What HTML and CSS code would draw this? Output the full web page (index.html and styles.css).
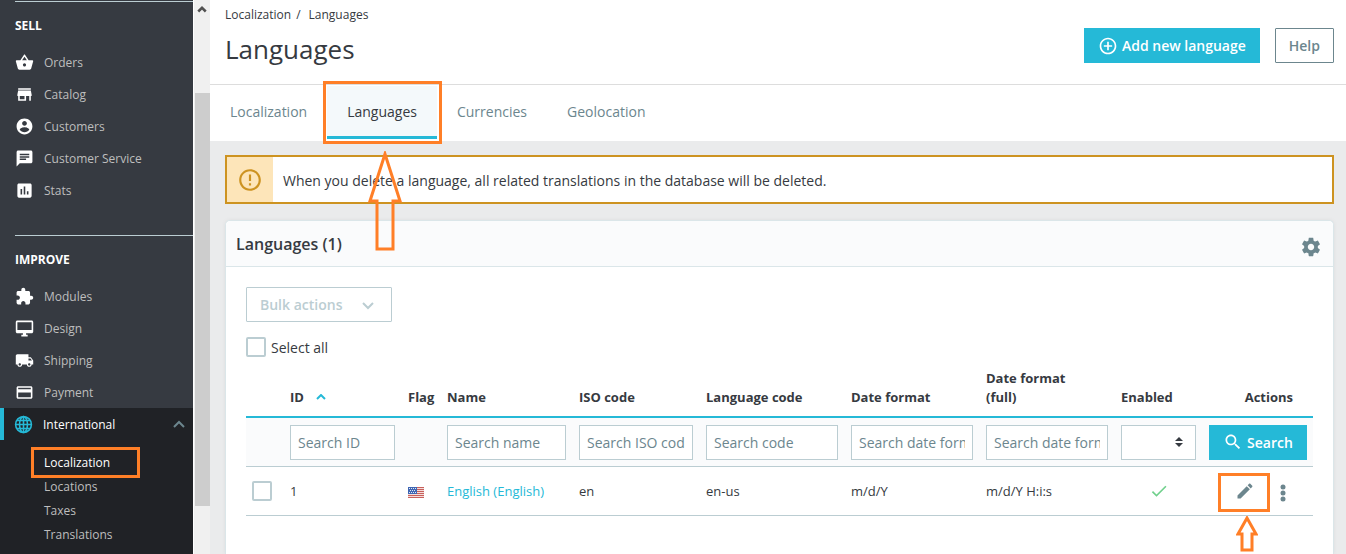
FILE: index.html
```html
<!DOCTYPE html>
<html lang="en">
<head>
    <meta charset="UTF-8">
    <meta name="viewport" content="width=device-width, initial-scale=1.0">
    <title>Languages</title>
    <link rel="stylesheet" href="styles.css">
</head>
<body>

<nav class="sidebar">
    <h2 class="nav-title">SELL</h2>
    <ul class="nav-list">
        <li><a href="#"><svg viewBox="0 0 24 24"><path d="M17.21 9l-4.38-6.56c-.19-.28-.51-.42-.83-.42-.32 0-.64.14-.83.43L6.79 9H2c-.55 0-1 .45-1 1 0 .09.01.18.04.27l2.54 9.27c.23.84 1 1.46 1.92 1.46h13c.92 0 1.69-.62 1.93-1.46l2.54-9.27L23 10c0-.55-.45-1-1-1h-4.79zM9 9l3-4.4L15 9H9zm3 8c-1.1 0-2-.9-2-2s.9-2 2-2 2 .9 2 2-.9 2-2 2z"/></svg>Orders</a></li>
        <li><a href="#"><svg viewBox="0 0 24 24"><path d="M20 4H4v2h16V4zm1 10v-2l-1-5H4l-1 5v2h1v6h10v-6h4v6h2v-6h1zm-9 4H6v-4h6v4z"/></svg>Catalog</a></li>
        <li><a href="#"><svg viewBox="0 0 24 24"><path d="M12 2C6.480 2 2 6.480 2 12s4.480 10 10 10 10-4.480 10-10S17.520 2 12 2zm0 3c1.660 0 3 1.340 3 3s-1.340 3-3 3-3-1.340-3-3 1.340-3 3-3zm0 14.200c-2.500 0-4.710-1.280-6-3.220.03-1.990 4-3.080 6-3.080 1.990 0 5.970 1.090 6 3.080-1.290 1.940-3.500 3.220-6 3.220z"/></svg>Customers</a></li>
        <li><a href="#"><svg viewBox="0 0 24 24"><path d="M20 2H4c-1.100 0-1.990.9-1.990 2L2 22l4-4h14c1.100 0 2-.9 2-2V4c0-1.100-.9-2-2-2zM6 9h12v2H6V9zm8 5H6v-2h8v2zm4-6H6V6h12v2z"/></svg>Customer Service</a></li>
        <li><a href="#"><svg viewBox="0 0 24 24"><path d="M19 3H5c-1.100 0-2 .9-2 2v14c0 1.100.9 2 2 2h14c1.100 0 2-.9 2-2V5c0-1.100-.9-2-2-2zM9 17H7v-7h2v7zm4 0h-2V7h2v10zm4 0h-2v-4h2v4z"/></svg>Stats</a></li>
    </ul>

    <h2 class="nav-title">IMPROVE</h2>
    <ul class="nav-list">
        <li><a href="#"><svg viewBox="0 0 24 24"><path d="M20.500 11H19V7c0-1.100-.9-2-2-2h-4V3.500C13 2.120 11.880 1 10.500 1S8 2.120 8 3.500V5H4c-1.100 0-1.990.9-1.990 2v3.800H3.500c1.490 0 2.700 1.210 2.700 2.700s-1.210 2.700-2.700 2.700H2V20c0 1.100.9 2 2 2h3.800v-1.500c0-1.490 1.210-2.700 2.700-2.700 1.490 0 2.700 1.210 2.700 2.700V22H17c1.100 0 2-.9 2-2v-4h1.500c1.380 0 2.500-1.120 2.500-2.500S21.880 11 20.500 11z"/></svg>Modules</a></li>
        <li><a href="#"><svg viewBox="0 0 24 24"><path d="M21 2H3c-1.100 0-2 .9-2 2v12c0 1.100.9 2 2 2h7v2H8v2h8v-2h-2v-2h7c1.100 0 2-.9 2-2V4c0-1.100-.9-2-2-2zm0 12H3V4h18v10z"/></svg>Design</a></li>
        <li><a href="#"><svg viewBox="0 0 24 24"><path d="M20 8h-3V4H3c-1.100 0-2 .9-2 2v11h2c0 1.660 1.340 3 3 3s3-1.340 3-3h6c0 1.660 1.340 3 3 3s3-1.340 3-3h2v-5l-3-4zM6 18.500c-.83 0-1.500-.67-1.500-1.500s.67-1.500 1.500-1.500 1.500.67 1.500 1.500-.67 1.500-1.500 1.500zm13.500-9l1.960 2.500H17V9.500h2.500zm-1.500 9c-.83 0-1.500-.67-1.500-1.500s.67-1.500 1.500-1.500 1.500.67 1.500 1.500-.67 1.500-1.500 1.500z"/></svg>Shipping</a></li>
        <li><a href="#"><svg viewBox="0 0 24 24"><path d="M20 4H4c-1.110 0-1.990.89-1.990 2L2 18c0 1.110.89 2 2 2h16c1.110 0 2-.89 2-2V6c0-1.110-.89-2-2-2zm0 14H4v-6h16v6zm0-10H4V6h16v2z"/></svg>Payment</a></li>
        <li class="open">
            <a href="#"><svg viewBox="0 0 24 24" class="globe"><circle cx="12" cy="12" r="10"/><ellipse cx="12" cy="12" rx="5" ry="10"/><path d="M12 2v20M2 12h20M4 7h16M4 17h16"/></svg>International<svg viewBox="0 0 12 8" class="caret"><path d="M1 7l5-5 5 5"/></svg></a>
            <ul class="subnav">
                <li><a href="#" class="current">Localization<span class="mark mark-nav"></span></a></li>
                <li><a href="#">Locations</a></li>
                <li><a href="#">Taxes</a></li>
                <li><a href="#">Translations</a></li>
            </ul>
        </li>
    </ul>
</nav>

<div class="scrollbar">
    <svg viewBox="0 0 8 6"><path d="M1 5l3-3 3 3"/></svg>
    <div class="thumb"></div>
</div>

<main class="main">
    <header class="header">
        <div>
            <div class="breadcrumb"><a href="#">Localization</a><span>/</span><a href="#">Languages</a></div>
            <h1>Languages</h1>
        </div>
        <div class="toolbar">
            <button class="btn btn-primary" type="button"><svg viewBox="0 0 24 24"><path d="M13 7h-2v4H7v2h4v4h2v-4h4v-2h-4V7zm-1-5C6.480 2 2 6.480 2 12s4.480 10 10 10 10-4.480 10-10S17.520 2 12 2zm0 18c-4.410 0-8-3.590-8-8s3.590-8 8-8 8 3.590 8 8-3.590 8-8 8z"/></svg>Add new language</button>
            <button class="btn btn-outline" type="button">Help</button>
        </div>
    </header>

    <div class="tabs">
        <a href="#">Localization</a>
        <a href="#" class="active">Languages
            <span class="mark mark-tab"></span>
            <svg class="arrow arrow-tab" viewBox="0 0 34 100"><path d="M17 3L2 50h7v48h16V50h7z"/></svg>
        </a>
        <a href="#">Currencies</a>
        <a href="#">Geolocation</a>
    </div>

    <div class="content">
        <div class="alert">
            <div class="alert-icon"><svg viewBox="0 0 24 24"><path d="M11 15h2v2h-2zm0-8h2v6h-2zm.99-5C6.470 2 2 6.480 2 12s4.470 10 9.990 10C17.520 22 22 17.520 22 12S17.520 2 11.990 2zM12 20c-4.420 0-8-3.580-8-8s3.580-8 8-8 8 3.580 8 8-3.580 8-8 8z"/></svg></div>
            <p>When you delete a language, all related translations in the database will be deleted.</p>
        </div>

        <section class="card">
            <div class="card-header">
                <h3>Languages (1)</h3>
                <button class="icon-btn" type="button" aria-label="Settings"><svg class="gear" viewBox="0 0 24 24"><path d="M19.430 12.980c.04-.32.07-.64.07-.98s-.03-.66-.07-.98l2.110-1.650c.19-.15.24-.42.12-.64l-2-3.460c-.12-.22-.39-.3-.61-.22l-2.490 1c-.52-.4-1.080-.73-1.690-.98l-.38-2.650C14.460 2.180 14.250 2 14 2h-4c-.25 0-.46.18-.49.42l-.38 2.650c-.61.25-1.170.59-1.690.98l-2.490-1c-.23-.09-.49 0-.61.22l-2 3.460c-.13.22-.07.49.12.64l2.110 1.650c-.04.32-.07.65-.07.98s.03.66.07.98l-2.110 1.650c-.19.15-.24.42-.12.64l2 3.460c.12.22.39.3.61.22l2.490-1c.52.4 1.080.73 1.690.98l.38 2.650c.03.24.24.42.49.42h4c.25 0 .46-.18.49-.42l.38-2.650c.61-.25 1.170-.59 1.690-.98l2.490 1c.23.09.49 0 .61-.22l2-3.460c.12-.22.07-.49-.12-.64l-2.110-1.650zM12 15.500c-1.930 0-3.500-1.570-3.500-3.500s1.570-3.500 3.500-3.500 3.500 1.570 3.500 3.500-1.570 3.500-3.500 3.500z"/></svg></button>
            </div>

            <div class="card-body">
                <button class="btn btn-bulk" type="button" disabled>Bulk actions<svg viewBox="0 0 12 8"><path d="M1 1l5 5 5-5"/></svg></button>
                <label class="select-all"><input type="checkbox">Select all</label>

                <table>
                    <colgroup>
                        <col class="c-check"><col class="c-id"><col class="c-flag"><col class="c-name"><col class="c-iso"><col class="c-code"><col class="c-date"><col class="c-date"><col class="c-enabled"><col class="c-actions">
                    </colgroup>
                    <thead>
                        <tr>
                            <th></th>
                            <th>ID<svg class="sort" viewBox="0 0 10 6"><path d="M1 5l4-4 4 4"/></svg></th>
                            <th>Flag</th>
                            <th>Name</th>
                            <th>ISO code</th>
                            <th>Language code</th>
                            <th>Date format</th>
                            <th>Date format<br>(full)</th>
                            <th>Enabled</th>
                            <th class="th-actions">Actions</th>
                        </tr>
                        <tr class="filters">
                            <td></td>
                            <td><input type="text" placeholder="Search ID" aria-label="Search ID"></td>
                            <td></td>
                            <td><input type="text" placeholder="Search name" aria-label="Search name"></td>
                            <td><input type="text" placeholder="Search ISO code" aria-label="Search ISO code"></td>
                            <td><input type="text" placeholder="Search code" aria-label="Search code"></td>
                            <td><input type="text" placeholder="Search date format" aria-label="Search date format"></td>
                            <td><input type="text" placeholder="Search date format" aria-label="Search full date format"></td>
                            <td>
                                <div class="select">
                                    <select aria-label="Enabled"><option></option><option>Yes</option><option>No</option></select>
                                    <svg viewBox="0 0 8 10"><path d="M4 0l4 4H0zM4 10l4-4H0z"/></svg>
                                </div>
                            </td>
                            <td class="td-actions"><button class="btn btn-primary btn-search" type="button"><svg viewBox="0 0 24 24"><path d="M15.500 14h-.79l-.28-.27C15.410 12.590 16 11.110 16 9.500 16 5.910 13.090 3 9.500 3S3 5.910 3 9.500 5.910 16 9.500 16c1.610 0 3.090-.59 4.230-1.570l.27.28v.79l5 4.990L20.490 19l-4.990-5zm-6 0C7.010 14 5 11.990 5 9.500S7.010 5 9.500 5 14 7.010 14 9.500 11.990 14 9.500 14z"/></svg>Search</button></td>
                        </tr>
                    </thead>
                    <tbody>
                        <tr>
                            <td><input type="checkbox" aria-label="Select English"></td>
                            <td>1</td>
                            <td>
                                <svg class="flag" viewBox="0 0 16 11">
                                    <rect width="16" height="11" fill="#f3dcda"/>
                                    <path d="M0 .5h16M0 2.500h16M0 4.500h16M0 6.500h16M0 8.500h16M0 10.500h16" stroke="#c8605c"/>
                                    <rect width="9" height="7" fill="#3f66b3"/>
                                    <path d="M1 1.500h7M2 3.500h6M1 5.500h7" stroke="#dfe7f5" stroke-dasharray="1 1"/>
                                </svg>
                            </td>
                            <td><a href="#">English (English)</a></td>
                            <td>en</td>
                            <td>en-us</td>
                            <td>m/d/Y</td>
                            <td>m/d/Y H:i:s</td>
                            <td class="td-enabled"><svg class="check" viewBox="0 0 24 24"><path d="M9 16.170L4.830 12l-1.420 1.410L9 19 21 7l-1.410-1.410z"/></svg></td>
                            <td>
                                <div class="row-actions">
                                    <a href="#" class="edit" aria-label="Edit">
                                        <svg viewBox="0 0 24 24"><path d="M3 17.250V21h3.750L17.810 9.940l-3.750-3.750L3 17.250zM20.710 7.040c.39-.39.39-1.020 0-1.410l-2.340-2.340c-.39-.39-1.020-.39-1.410 0l-1.830 1.830 3.750 3.750 1.830-1.830z"/></svg>
                                        <span class="mark mark-edit"></span>
                                        <svg class="arrow arrow-edit" viewBox="0 0 22 36"><path d="M11 2L2 18h4v16h10V18h4z"/></svg>
                                    </a>
                                    <button class="icon-btn" type="button" aria-label="More"><svg class="dots" viewBox="0 0 6 18"><circle cx="3" cy="3" r="2.500"/><circle cx="3" cy="9" r="2.500"/><circle cx="3" cy="15" r="2.500"/></svg></button>
                                </div>
                            </td>
                        </tr>
                    </tbody>
                </table>
            </div>
        </section>
    </div>
</main>

</body>
</html>
```

FILE: styles.css
```css
* {
    box-sizing: border-box;
}
body {
    display: flex;
    height: 100vh;
    margin: 0;
    overflow: hidden;
    font-family: "Open Sans", sans-serif;
    font-size: 14px;
    color: #363a41;
    background-color: #eaebec;
}
a {
    color: inherit;
    text-decoration: none;
}
svg {
    fill: currentColor;
    flex-shrink: 0;
}
ul {
    list-style: none;
    margin: 0;
    padding: 0;
}
h1, h2, h3, p {
    margin: 0;
}

/* Sidebar */
.sidebar {
    width: 193px;
    flex-shrink: 0;
    padding-top: 1px;
    overflow: hidden;
    background-color: #363a41;
    color: #bebebe;
    font-size: 12px;
}
.nav-title {
    margin-left: 15px;
    padding: 14px 0 10px;
    border-top: 1px solid #bbcdd2;
    color: #fff;
    font-size: 12px;
    line-height: 20px;
}
.nav-list + .nav-title {
    margin-top: 29px;
}
.nav-list > li > a {
    display: flex;
    align-items: center;
    gap: 10px;
    height: 32px;
    padding-left: 15px;
}
.nav-list > li > a > svg {
    width: 19px;
    height: 19px;
    color: #fff;
}
.nav-list > .open {
    background-color: #202226;
}
.nav-list > .open > a {
    border-left: 4px solid #25b9d7;
    padding: 0 8px 0 10px;
    color: #fff;
}
.nav-list .globe {
    fill: none;
    stroke: #25b9d7;
    stroke-width: 2;
}
.nav-list > .open > a > .caret {
    width: 12px;
    height: 8px;
    margin-left: auto;
    fill: none;
    stroke: #6c868e;
    stroke-width: 2;
}
.subnav {
    padding: 11px 0 20px 44px;
    line-height: 24px;
}
.subnav a {
    position: relative;
}
.subnav .current {
    color: #fff;
}

/* Scrollbar of the sidebar */
.scrollbar {
    display: flex;
    flex-direction: column;
    align-items: center;
    width: 17px;
    flex-shrink: 0;
    border-left: 1px solid #fff;
    background-color: #f0f0f0;
}
.scrollbar svg {
    width: 10px;
    height: 8px;
    margin: 5px 0 80px;
    fill: none;
    stroke: #505050;
    stroke-width: 2;
}
.scrollbar .thumb {
    width: 15px;
    height: 413px;
    background-color: #cdcdcd;
}

/* Header */
.main {
    display: flex;
    flex-direction: column;
    flex: 1;
    min-width: 0;
}
.header {
    display: flex;
    justify-content: space-between;
    align-items: flex-start;
    height: 85px;
    flex-shrink: 0;
    padding: 6px 12px 0 15px;
    border-bottom: 1px solid #dddddd;
    background-color: #fff;
}
.breadcrumb {
    font-size: 12px;
    line-height: 18px;
}
.breadcrumb span {
    margin: 0 8px 0 5px;
}
h1 {
    margin-top: 7px;
    font-size: 26px;
    font-weight: 400;
    line-height: 36px;
}
.toolbar {
    display: flex;
    gap: 15px;
    padding-top: 22px;
}
.btn {
    display: flex;
    align-items: center;
    justify-content: center;
    height: 35px;
    padding: 0 13px;
    border: 1px solid #25b9d7;
    font-family: inherit;
    font-size: 14px;
    font-weight: 600;
    cursor: pointer;
}
.btn svg {
    width: 20px;
    height: 20px;
}
.btn-primary {
    gap: 4px;
    background-color: #25b9d7;
    color: #fff;
}
.btn-outline {
    border-color: #6c868e;
    border-radius: 1px;
    background-color: #fff;
    color: #6c868e;
}

/* Tabs */
.tabs {
    display: flex;
    height: 56px;
    flex-shrink: 0;
    padding: 1px 0 2px;
    background-color: #fff;
    color: #6c868e;
}
.tabs > a {
    position: relative;
    padding: 0 20px;
    line-height: 52px;
    border-bottom: 3px solid transparent;
}
.tabs > .active {
    border-color: #25b9d7;
    background-color: #f4f9fb;
    color: #363a41;
}

/* Alert */
.content {
    display: flex;
    flex-direction: column;
    flex: 1;
    padding: 14px 12px 0 15px;
}
.alert {
    display: flex;
    align-items: center;
    height: 49px;
    flex-shrink: 0;
    border: 2px solid #cd9321;
    background-color: #fff;
}
.alert p {
    padding-top: 2px;
}
.alert-icon {
    display: flex;
    align-items: center;
    justify-content: center;
    width: 46px;
    height: 100%;
    margin-right: 10px;
    background-color: #fde5b9;
    color: #cd9321;
}
.alert-icon svg {
    width: 26px;
    height: 26px;
}

/* Card */
.card {
    flex: 1;
    margin: 16px 0 0;
    border: 1px solid #dbe6e9;
    border-bottom: none;
    border-radius: 5px 5px 0 0;
    box-shadow: 0 0 4px rgba(0, 0, 0, 0.06);
    background-color: #fff;
}
.card-header {
    display: flex;
    align-items: center;
    justify-content: space-between;
    height: 46px;
    padding: 0 11px 0 10px;
    border-bottom: 1px solid #dbe6e9;
    border-radius: 5px 5px 0 0;
    background-color: #fafbfc;
}
.card-header h3 {
    font-size: 16px;
    font-weight: 600;
}
.icon-btn {
    display: flex;
    padding: 0;
    border: none;
    background: none;
    color: #6c868e;
    cursor: pointer;
}
.gear {
    width: 22px;
    height: 22px;
    margin-top: 6px;
}
.card-body {
    padding: 20px;
}
.btn-bulk {
    gap: 20px;
    border-color: #bbcdd2;
    border-radius: 1px;
    background-color: #fff;
    color: #bbcdd2;
}
.btn-bulk svg {
    width: 12px;
    height: 8px;
    margin: 3px 4px 0 0;
    fill: none;
    stroke: currentColor;
    stroke-width: 2;
}
.select-all {
    display: flex;
    align-items: center;
    gap: 5px;
    width: max-content;
    margin: 15px 0 12px;
}
input[type="checkbox"] {
    display: block;
    width: 20px;
    height: 20px;
    margin: 0;
    appearance: none;
    border: 2px solid #bbcdd2;
    border-radius: 2px;
    background-color: #fff;
}

/* Table */
table {
    width: 100%;
    table-layout: fixed;
    border-collapse: separate;
    border-spacing: 0;
    font-size: 13px;
}
.c-check { width: 38px; }
.c-id { width: 118px; }
.c-flag { width: 39px; }
.c-name { width: 132px; }
.c-iso { width: 127px; }
.c-code { width: 145px; }
.c-date { width: 135px; }
.c-enabled { width: 88px; }
.c-actions { width: 110px; }
th, td {
    padding: 0 7px 0 6px;
    text-align: left;
    border-bottom: 1px solid #bbcdd2;
}
th {
    padding-bottom: 9px;
    border-bottom: 2px solid #25b9d7;
    line-height: 19px;
    vertical-align: bottom;
}
td {
    height: 49px;
}
td a {
    color: #25b9d7;
}
.sort {
    width: 10px;
    height: 6px;
    margin: 0 0 2px 12px;
    fill: none;
    stroke: #25b9d7;
    stroke-width: 2;
}
.th-actions {
    padding-right: 20px;
    text-align: right;
}
.filters td {
    background-color: #fafbfc;
}
.filters input, .filters select {
    display: block;
    width: 100%;
    height: 35px;
    padding: 0 7px;
    border: 1px solid #bbcdd2;
    border-radius: 0;
    background-color: #fff;
    font-family: inherit;
    font-size: 14px;
    color: #363a41;
}
.filters input::placeholder {
    color: #6c868e;
}
.select {
    position: relative;
}
.filters select {
    appearance: none;
}
.select svg {
    position: absolute;
    top: 12px;
    right: 13px;
    width: 8px;
    height: 10px;
    pointer-events: none;
}
.filters .td-actions {
    padding-right: 6px;
}
.btn-search {
    width: 100%;
}
.flag {
    display: block;
    width: 16px;
    height: 11px;
    margin-top: 2px;
}
.td-enabled svg {
    display: block;
    width: 20px;
    height: 20px;
    margin: 0 auto;
    color: #70d08c;
}
.row-actions {
    display: flex;
    align-items: center;
    justify-content: flex-end;
    gap: 25px;
    padding-right: 20px;
}
.edit {
    position: relative;
    color: #6c868e;
}
.edit svg {
    display: block;
    width: 20px;
    height: 20px;
}
.row-actions .dots {
    width: 6px;
    height: 18px;
    margin-top: 3px;
}

/* Orange marks drawn over the page */
.mark {
    position: absolute;
    border: 3px solid #ff7f27;
    pointer-events: none;
}
.mark-nav {
    top: -7px;
    left: -13px;
    width: 109px;
    height: 31px;
}
.mark-tab {
    top: -5px;
    left: -4px;
    right: -5px;
    bottom: -8px;
}
.mark-edit {
    top: -8px;
    left: -17px;
    width: 52px;
    height: 39px;
}
.arrow {
    position: absolute;
    z-index: 1;
    fill: none;
    stroke: #ff7f27;
    stroke-width: 3;
    pointer-events: none;
}
.arrow-tab {
    top: 65px;
    left: 41px;
    width: 34px;
    height: 100px;
}
.edit .arrow-edit {
    top: 35px;
    left: 1px;
    width: 22px;
    height: 36px;
}
```
